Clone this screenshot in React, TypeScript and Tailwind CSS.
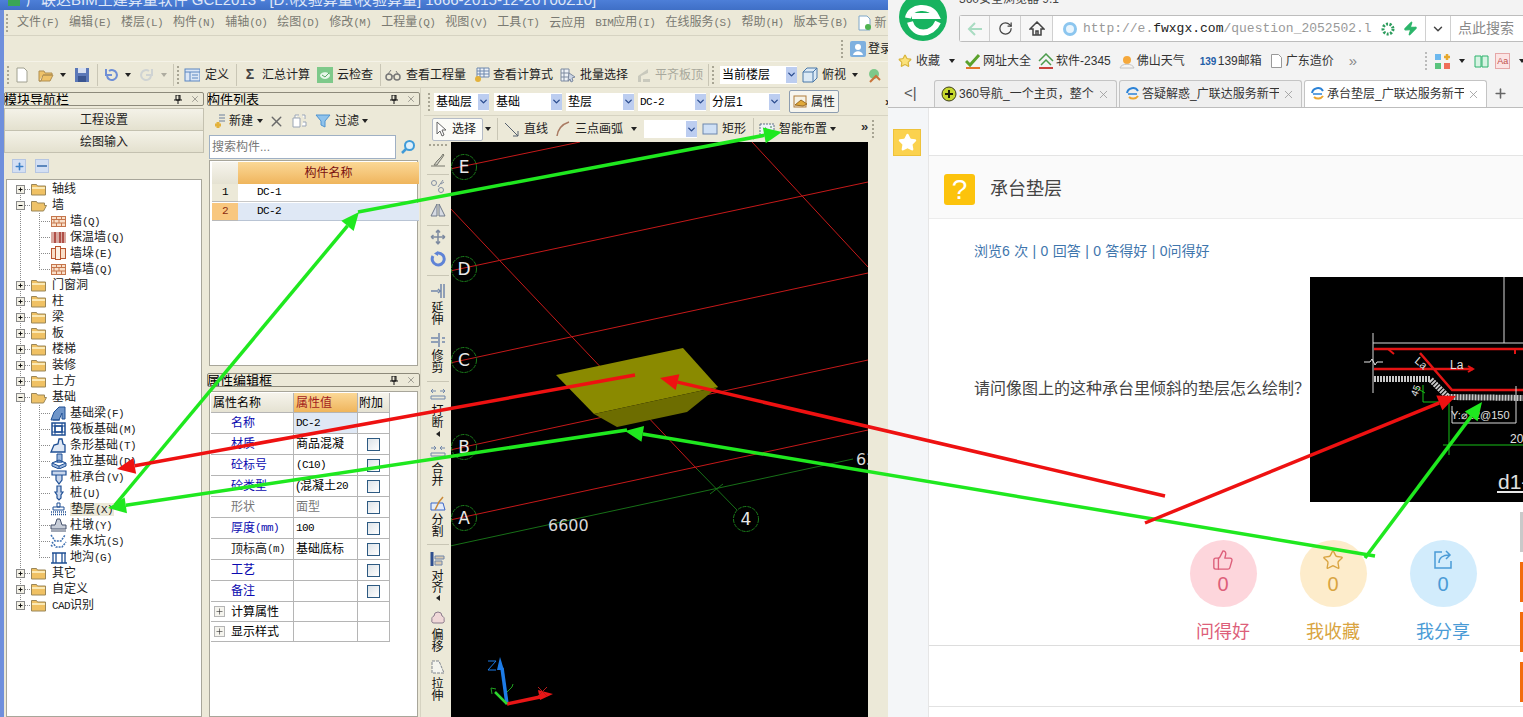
import { ChevronDown, Plus, RotateCw, Star, ThumbsUp, X, Zap } from "lucide-react";
import type { ReactNode } from "react";

// half-width latin, same pitch as the bitmap font in the app
const Lat = ({ children }: { children: ReactNode }) => (
  <span className="text-[11px] tracking-[-0.6px] [font-family:'Liberation_Mono',monospace]">{children}</span>
);

const Caret = ({ className = "" }: { className?: string }) => (
  <svg width="6" height="4" viewBox="0 0 6 4" className={`shrink-0 ${className}`}>
    <path d="M0 0h6L3 4z" fill="#222" />
  </svg>
);

const Gripper = ({ className = "" }: { className?: string }) => (
  <div className={`w-[3px] h-[18px] shrink-0 border-l-2 border-dotted border-[#a8a594] ${className}`} />
);

const Sep = ({ className = "" }: { className?: string }) => (
  <div className={`w-px h-[22px] shrink-0 bg-[#c9c6b5] ${className}`} />
);

const Ico = ({ children, className = "", w = 16 }: { children: ReactNode; className?: string; w?: number }) => (
  <svg width={w} height="16" viewBox={`0 0 ${w} 16`} className={`shrink-0 ${className}`}>
    {children}
  </svg>
);

const Select = ({ label, className, mono }: { label?: string; className: string; mono?: boolean }) => (
  <div className={`h-[18px] bg-white flex items-center justify-between shrink-0 ${className}`}>
    <span className="pl-[2px] text-[12px] leading-none text-black">{mono ? <Lat>{label}</Lat> : label}</span>
    <span className="w-[11px] h-[16px] bg-[#bccdf0] flex items-center justify-center">
      <ChevronDown size={11} strokeWidth={3} color="#2a4c8f" />
    </span>
  </div>
);

const Menu = ({ t, k }: { t: string; k?: string }) => (
  <span className="whitespace-nowrap">
    {t}
    {k && <Lat>{k}</Lat>}
  </span>
);

const PanelHead = ({ title }: { title: string }) => (
  <div className="h-[14px] mt-[4px] shrink-0 rounded-[2px] border border-[#8d8a7b] bg-[#ece9d8] flex items-center justify-between text-[13px] leading-none text-black overflow-hidden">
    <span className="-ml-px whitespace-nowrap">{title}</span>
    <span className="flex items-center gap-[8px] pr-[3px]">
      <svg width="8" height="9" viewBox="0 0 8 9">
        <path d="M2 0h4v5H2zM0 5h8M4 5v4M5 0v5" stroke="#111" fill="none" />
      </svg>
      <X size={10} strokeWidth={1} color="#333" />
    </span>
  </div>
);

const treeIcon = (kind: string) => {
  const navy = "#1f4f94";
  switch (kind) {
    case "wall":
      return (
        <g stroke="#c5764d" fill="#f9dfc9">
          <rect x="44.5" y="3.5" width="14" height="10" />
          <path d="M44.5 6.5h14M44.5 10h14M49.5 3.5v3M54.5 3.5v3M47 6.5v3.5M52 6.5v3.5M49.5 10v3.5M54.5 10v3.5" fill="none" />
        </g>
      );
    case "insul":
      return (
        <g>
          <rect x="44" y="3" width="15" height="11" fill="#d9a9a0" />
          <path d="M48 3v11M53 3v11M56 3v11" stroke="#a3332d" strokeWidth="1.5" />
        </g>
      );
    case "pier":
      return (
        <g stroke="#b8552f" fill="#f9dfc9">
          <rect x="44.5" y="3.5" width="14" height="10" />
          <rect x="48.5" y="1.5" width="5" height="13" fill="#fdf0e2" />
        </g>
      );
    case "beam":
      return <path d="M44 15l3-8 5-5h6v12h-3V8l-3 7zM46 15h7" fill="#6f95c9" stroke={navy} />;
    case "raft":
      return (
        <g stroke={navy} fill="none" strokeWidth="1.5">
          <rect x="45" y="2" width="13" height="12" />
          <rect x="48" y="5" width="7" height="6" />
          <path d="M45 5h13M45 11h13M48 2v12M55 2v12" strokeWidth="1" />
        </g>
      );
    case "strip":
      return <path d="M44 15l3-7 4-1 1-5h3l1 5 2 1v7zM44 15h14" fill="#dfe8f5" stroke={navy} strokeWidth="1.3" />;
    case "iso":
      return <path d="M45 10l7-3 7 3v3l-7 3-7-3zM50 1h5v8h-5zM45 10l7 3 7-3M52 13v3" fill="#9db9df" stroke={navy} />;
    case "cap":
      return <path d="M45 2h14v4H45zM49 6h6v5l-3 4-3-4z" fill="#c8d6ec" stroke={navy} strokeWidth="1.2" />;
    case "pile":
      return <path d="M50 1h4v6h2l-2 3v3l-2 2-2-2v-3l-2-3h2z" fill="#c8d6ec" stroke={navy} strokeWidth="1.2" />;
    case "pad":
      return (
        <g stroke={navy} fill="none">
          <path d="M50 2h3v4h-3zM46 6h11v3H46z" fill="#fff" />
          <path d="M44 11h15M44 13.500h15" strokeDasharray="1 1" strokeWidth="1.5" />
        </g>
      );
    case "pier2":
      return <path d="M50 2h3l2 6h4v4H44V8h4zM44 14h15" fill="#c7cdd8" stroke="#44506a" />;
    case "sump":
      return <path d="M44 2l4 6h6l4-6M45 9l4 5h6l4-5M44 12l2 2" fill="none" stroke="#3d6fb0" strokeWidth="1.5" strokeDasharray="2 1" />;
    default:
      return (
        <g stroke={navy} fill="none" strokeWidth="1.3">
          <path d="M45 4h14M46 4v10h12V4M49 4v10M55 4v10M44 14h16" />
        </g>
      );
  }
};

type Node = { t: string; k?: string; open?: boolean; icon?: string; last?: boolean; first?: boolean; end?: boolean };

const nodes: Node[] = [
  { t: "轴线", first: true },
  { t: "墙", open: true },
  { t: "墙", k: "(Q)", icon: "wall" },
  { t: "保温墙", k: "(Q)", icon: "insul" },
  { t: "墙垛", k: "(E)", icon: "pier" },
  { t: "幕墙", k: "(Q)", icon: "wall", last: true },
  { t: "门窗洞" },
  { t: "柱" },
  { t: "梁" },
  { t: "板" },
  { t: "楼梯" },
  { t: "装修" },
  { t: "土方" },
  { t: "基础", open: true },
  { t: "基础梁", k: "(F)", icon: "beam" },
  { t: "筏板基础", k: "(M)", icon: "raft" },
  { t: "条形基础", k: "(T)", icon: "strip" },
  { t: "独立基础", k: "(D)", icon: "iso" },
  { t: "桩承台", k: "(V)", icon: "cap" },
  { t: "桩", k: "(U)", icon: "pile" },
  { t: "垫层", k: "(X)", icon: "pad" },
  { t: "柱墩", k: "(Y)", icon: "pier2" },
  { t: "集水坑", k: "(S)", icon: "sump" },
  { t: "地沟", k: "(G)", icon: "ditch", last: true },
  { t: "其它" },
  { t: "自定义" },
  { t: "CAD识别", end: true },
];

const TreeRow = ({ n }: { n: Node }) => {
  const dots = { stroke: "#8a8a8a", strokeDasharray: "1 1", fill: "none" };
  const child = !!n.icon;
  return (
    <div className="h-4 flex items-center">
      <svg width={child ? 60 : 44} height="16" className="shrink-0">
        <path d={`M13.500 ${n.first ? 8 : 0}V${n.end ? 8 : 16}`} {...dots} />
        {child ? (
          <>
            <path d={`M32.500 0V${n.last ? 8 : 16}M32 8.500h12`} {...dots} />
            {treeIcon(n.icon!)}
          </>
        ) : (
          <>
            <path d="M18 8.500h6" {...dots} />
            <rect x="9.500" y="4.500" width="8" height="8" fill="#f3f1e6" stroke="#8a8a8a" />
            <path d={n.open ? "M11.500 8.500h4" : "M11.500 8.500h4M13.500 6.500v4"} stroke="#111" />
            {n.open ? (
              <path d="M24.500 4.500h5l1 1.500h7v2.500h2l-3 5.500h-12z" fill="#eec269" stroke="#9a8658" />
            ) : (
              <>
                <path d="M24.500 3.500h5l1 1.500h8v9h-14z" fill="#f0c163" stroke="#9a8658" />
                <path d="M25 6h13v2H25z" fill="#fbe9b4" />
              </>
            )}
          </>
        )}
      </svg>
      <span
        className={`text-[12px] leading-none text-[#222] whitespace-nowrap ${child ? "ml-[3px]" : "ml-px"} ${
          n.t === "垫层" ? "bg-[#ece9d8] px-px" : ""
        }`}
      >
        {n.t === "CAD识别" ? (
          <>
            <Lat>CAD</Lat>识别
          </>
        ) : (
          n.t
        )}
        {n.k && <Lat>{n.k}</Lat>}
      </span>
    </div>
  );
};

const NavPanel = () => (
  <div className="w-[200px] shrink-0 flex flex-col">
    <PanelHead title="模块导航栏" />
    <div className="mt-[2px] h-[23px] flex items-center justify-center text-[12px] border border-[#c4c1b0] bg-gradient-to-b from-[#f4f2e8] to-[#e4e1cf] text-[#222]">
      工程设置
    </div>
    <div className="h-[22px] flex items-center justify-center text-[12px] border-x border-b border-[#c4c1b0] bg-gradient-to-b from-[#f4f2e8] to-[#e4e1cf] text-[#222]">
      绘图输入
    </div>
    <div className="h-[26px] flex items-center gap-[9px] pl-[8px] bg-[#ece9d8]">
      <span className="w-[14px] h-[14px] bg-[#d3dff3] border border-[#b6c6e2] flex items-center justify-center">
        <Plus size={11} strokeWidth={3.500} color="#3b7fc7" />
      </span>
      <span className="w-[14px] h-[14px] bg-[#d3dff3] border border-[#b6c6e2] flex items-center justify-center">
        <span className="w-[10px] h-[2px] bg-[#5c87bd]" />
      </span>
    </div>
    <div className="flex-1 ml-[2px] mr-[2px] border border-[#a8a69a] bg-white pt-[1px]">
      {nodes.map((n, i) => (
        <TreeRow key={i} n={n} />
      ))}
    </div>
  </div>
);

const ListPanel = () => (
  <div className="h-[278px] shrink-0 flex flex-col">
    <PanelHead title="构件列表" />
    <div className="h-[26px] mt-[2px] shrink-0 flex items-center text-[12px] text-[#222] bg-[#ece9d8]">
      <Ico className="ml-[4px]">
        <path d="M4 12h6M7 9v6" stroke="#e3b23c" strokeWidth="3" />
        <path d="M8 2h6M8 5h6M8 8h6" stroke="#6a7f9c" />
      </Ico>
      <span className="ml-[2px]">新建</span>
      <Caret className="ml-[4px]" />
      <X size={17} strokeWidth={2} color="#6a6a6a" className="ml-[5px]" />
      <Ico className="ml-[7px]">
        <path d="M1 5h7v9H1zM3 5V2h4M10 2h3v4M11 9h3v4h-4" fill="#fff" stroke="#9aa5b5" />
      </Ico>
      <Ico className="ml-[7px]">
        <path d="M1 2h14L10 8v6l-4-2V8z" fill="#8fc3ec" stroke="#4f93cf" />
      </Ico>
      <span className="ml-[4px]">过滤</span>
      <Caret className="ml-[3px]" />
    </div>
    <div className="h-[26px] shrink-0 flex items-center bg-[#ece9d8] pl-[2px]">
      <div className="w-[187px] h-[24px] bg-white border border-[#9fb0c4] flex items-center pl-[2px] text-[12px] text-[#777]">搜索构件...</div>
      <svg width="16" height="16" viewBox="0 0 16 16" className="ml-[4px]">
        <circle cx="9.500" cy="6.500" r="4.500" fill="#dff0fb" stroke="#3f9bd8" strokeWidth="2" />
        <path d="M6 10l-4 4" stroke="#3f9bd8" strokeWidth="2.500" />
      </svg>
    </div>
    <div className="flex-1 mx-[2px] border border-[#a8a69a] bg-white px-[2px] pt-[1px]">
      <div className="grid grid-cols-[26px_181px] auto-rows-[18px] text-[12px] text-black">
        <div className="h-[22px] bg-gradient-to-b from-[#f6f4ec] to-[#e5e2d2]" />
        <div className="h-[22px] bg-gradient-to-b from-[#fbd896] to-[#efb55c] flex items-center justify-center text-[#7a0f0f]">构件名称</div>
        <div className="mt-[4px] h-[18px] bg-[#ece9d8] border-b border-[#b9b9b9] flex items-center justify-center"><Lat>1</Lat></div>
        <div className="mt-[4px] h-[18px] border-b border-[#c8c8c8] flex items-center pl-[19px]"><Lat>DC-1</Lat></div>
        <div className="mt-[5px] h-[18px] bg-[#f8c77f] border-b border-[#b9b9b9] flex items-center justify-center text-[#8a2b10]"><Lat>2</Lat></div>
        <div className="mt-[5px] h-[18px] bg-[#dfe8f5] border-b border-[#b9c4d4] flex items-center pl-[19px]"><Lat>DC-2</Lat></div>
      </div>
    </div>
  </div>
);

const props: { n: ReactNode; v?: ReactNode; c: string; g?: boolean }[] = [
  { n: "材质", v: "商品混凝", c: "text-[#0a0ab0]" },
  { n: "砼标号", v: <Lat>(C10)</Lat>, c: "text-[#0a0ab0]" },
  { n: "砼类型", v: <>(混凝土<Lat>20</Lat></>, c: "text-[#0a0ab0]" },
  { n: "形状", v: "面型", c: "text-[#777]", g: true },
  { n: <>厚度<Lat>(mm)</Lat></>, v: <Lat>100</Lat>, c: "text-[#0a0ab0]" },
  { n: <>顶标高<Lat>(m)</Lat></>, v: "基础底标", c: "text-[#222]" },
  { n: "工艺", c: "text-[#0a0ab0]" },
  { n: "备注", c: "text-[#0a0ab0]" },
];

const cell = "border-r border-b border-[#b5b5b5] flex items-center overflow-hidden whitespace-nowrap";

const PropPanel = () => (
  <div className="flex-1 mt-[3px] flex flex-col min-h-0">
    <PanelHead title="属性编辑框" />
    <div className="flex-1 mt-[4px] mx-[2px] border border-[#a8a69a] bg-white pl-[1px] pt-[1px] text-[12px] text-black">
      <div className="grid grid-cols-[83px_64px_32px] w-[179px]">
        <div className={`${cell} h-[20px] pl-[2px] bg-gradient-to-b from-[#f6f4ec] to-[#e5e2d2]`}>属性名称</div>
        <div className={`${cell} h-[20px] pl-[2px] bg-gradient-to-b from-[#fbd896] to-[#efb55c] text-[#a31d1d]`}>属性值</div>
        <div className={`${cell} h-[20px] pl-[1px] bg-gradient-to-b from-[#f6f4ec] to-[#e5e2d2]`}>附加</div>

        <div className={`${cell} h-[21px] pl-[20px] text-[#0a0ab0]`}>名称</div>
        <div className={`${cell} h-[21px] pl-[2px] bg-[#dfe8f5]`}><Lat>DC-2</Lat></div>
        <div className={`${cell} h-[21px]`} />

        {props.map((p, i) => (
          <div key={i} className="contents">
            <div className={`${cell} h-[21px] pl-[20px] ${p.c}`}>{p.n}</div>
            <div className={`${cell} h-[21px] pl-[2px] ${p.g ? "text-[#777]" : ""}`}>{p.v}</div>
            <div className={`${cell} h-[21px] justify-center`}>
              <span className="w-[13px] h-[13px] border border-[#2d5a82] bg-gradient-to-br from-[#dde3e8] to-white" />
            </div>
          </div>
        ))}

        {["计算属性", "显示样式"].map((t) => (
          <div key={t} className="contents">
            <div className={`${cell} h-[20px] pl-[3px]`}>
              <span className="w-[11px] h-[11px] mr-[6px] border border-[#b5b5b5] bg-[#f5f4ee] flex items-center justify-center">
                <Plus size={9} strokeWidth={1.500} color="#222" />
              </span>
              {t}
            </div>
            <div className={`${cell} h-[20px]`} />
            <div className={`${cell} h-[20px]`} />
          </div>
        ))}
      </div>
    </div>
  </div>
);

const VLabel = ({ t, className }: { t: string; className: string }) => (
  <div className={`flex flex-col items-center text-[12px] leading-[12px] text-[#111] ${className}`}>
    {t.split("").map((c) => (
      <span key={c}>{c}</span>
    ))}
  </div>
);

const VSep = ({ className }: { className: string }) => <div className={`w-[22px] h-px shrink-0 bg-[#c9c6b5] ${className}`} />;

const VCaret = ({ className }: { className: string }) => (
  <svg width="4" height="6" viewBox="0 0 4 6" className={className}>
    <path d="M4 0v6L0 3z" fill="#222" />
  </svg>
);

const VToolbar = () => (
  <div className="w-[27px] shrink-0 flex flex-col items-center bg-[#ece9d8]">
    <div className="mt-[2px] w-[18px] h-[2px] border-t-2 border-dotted border-[#a8a594]" />
    <Ico className="mt-[6px]">
      <path d="M1 14h14M4 13l3-4 4-4 2-3 1 1-2 3-3 4-2 3z" fill="#cfcfc4" stroke="#77776c" />
    </Ico>
    <VSep className="mt-[6px]" />
    <Ico className="mt-[3px]">
      <circle cx="4" cy="5" r="2.500" fill="none" stroke="#8590a3" />
      <circle cx="11" cy="12" r="2.500" fill="none" stroke="#8590a3" />
      <path d="M8 9l5-7M11 6l3-2" stroke="#8590a3" fill="none" />
    </Ico>
    <Ico className="mt-[8px]">
      <path d="M7 2v12H1zM9 2v12h6z" fill="#d7dbe3" stroke="#707a8a" />
    </Ico>
    <VSep className="mt-[7px]" />
    <Ico className="mt-[3px]">
      <path d="M8 1v14M1 8h14M8 1L6 3.500M8 1l2 2.500M8 15l-2-2.500M8 15l2-2.500M1 8l2.500-2M1 8l2.500 2M15 8l-2.500-2M15 8l-2.500 2" fill="none" stroke="#7d8aa0" strokeWidth="1.500" />
    </Ico>
    <Ico className="mt-[6px]">
      <path d="M8 2a6 6 0 1 1-5 3" fill="none" stroke="#5f83d6" strokeWidth="3" />
      <path d="M8 0v5L4 2.500z" fill="#5f83d6" />
    </Ico>
    <VSep className="mt-[8px]" />
    <Ico className="mt-[7px]">
      <path d="M1 8h7M11 1v14M14 1v14M8 6l2 2-2 2" fill="none" stroke="#7187ab" strokeWidth="1.500" />
    </Ico>
    <VLabel t="延伸" className="mt-[3px]" />
    <Ico className="mt-[6px]">
      <path d="M1 6h7M1 10h7M9 1v14M12 6h3M12 10h3" fill="none" stroke="#7187ab" strokeWidth="1.500" />
    </Ico>
    <VLabel t="修剪" className="mt-[2px]" />
    <VSep className="mt-[7px]" />
    <Ico className="mt-[4px]">
      <path d="M1 5h5M10 5h5M3 3L1 5l2 2M13 3l2 2-2 2M1 10h14v3H1z" fill="none" stroke="#7187ab" />
    </Ico>
    <VLabel t="打断" className="mt-[3px]" />
    <VCaret className="mt-[2px]" />
    <Ico className="mt-[6px]">
      <path d="M1 5h5M10 5h5M4 3l2 2-2 2M12 3l-2 2 2 2M1 10h14v3H1z" fill="none" stroke="#7187ab" />
    </Ico>
    <VLabel t="合并" className="mt-[4px]" />
    <Ico className="mt-[9px]">
      <path d="M1 7h12l2 7H1z" fill="#e4ecf8" stroke="#3a66c8" />
      <path d="M5 14l4-8 4-5" fill="none" stroke="#c98a3a" strokeWidth="1.500" />
    </Ico>
    <VLabel t="分割" className="mt-[2px]" />
    <VSep className="mt-[6px]" />
    <Ico className="mt-[6px]">
      <path d="M2 1v14" stroke="#2f4f8f" strokeWidth="3" />
      <path d="M5 5h9v3H5zM5 10h7v4H5z" fill="#d9c9b0" stroke="#7187ab" />
    </Ico>
    <VLabel t="对齐" className="mt-[3px]" />
    <VCaret className="mt-[1px]" />
    <Ico className="mt-[9px]">
      <path d="M2 10a3 3 0 0 1 2-4 4 4 0 0 1 8 0 3 3 0 0 1 2 4 2 2 0 0 1-2 3H4a2 2 0 0 1-2-3z" fill="#f0d8d8" stroke="#8d7d8d" />
    </Ico>
    <VLabel t="偏移" className="mt-[3px]" />
    <Ico className="mt-[6px]">
      <path d="M2 2h7l5 12H2z" fill="#f4f4ee" stroke="#80868f" strokeDasharray="3 1" />
    </Ico>
    <VLabel t="拉伸" className="mt-[3px]" />
  </div>
);

const axes: [string, number, number][] = [
  ["E", 464, 167],
  ["D", 464, 269],
  ["C", 464, 360],
  ["B", 464, 447],
  ["A", 464, 518],
  ["4", 746, 519],
];

const Canvas = () => (
  <svg viewBox="451 142 417 575" className="w-[417px] h-[575px] shrink-0 bg-black">
    <g stroke="#c51919" strokeWidth="1" fill="none">
      <path d="M450 169L580 142M450 271L868 182M450 363L868 273M450 450L868 360M450 520L868 430M752 142L868 267M450 208L697 469" />
    </g>
    <path d="M450 546L853 459M697 469L737 510M710 494L723 484" stroke="#176f17" fill="none" />
    <path d="M556 375L683 348L718 387L594 414z" fill="#8a8a00" />
    <path d="M594 414L718 387L687 412L617 427z" fill="#6d6d00" />
    {axes.map(([t, x, y]) => (
      <g key={t}>
        <circle cx={x} cy={y} r="12.500" fill="none" stroke="#1a7a1a" strokeDasharray="4 1" />
        <text x={x} y={y + 6} textAnchor="middle" fill="#e8e8e8" fontSize="17" fontFamily="DejaVu Sans">
          {t}
        </text>
      </g>
    ))}
    <text x="548" y="531" fill="#d8d8d8" fontSize="16" fontFamily="DejaVu Sans">6600</text>
    <text x="856" y="465" fill="#d8d8d8" fontSize="16" fontFamily="DejaVu Sans">63</text>
    <path d="M507 704L502 668" stroke="#1d7be6" strokeWidth="3.500" />
    <path d="M500 657l4 13h-7z" fill="#1d7be6" />
    <path d="M507 704L540 697" stroke="#e81616" strokeWidth="3.500" />
    <path d="M553 694l-13 6-2-10z" fill="#e81616" />
    <path d="M507 704L495 692" stroke="#2fd62f" strokeWidth="2.500" />
    <path d="M488 661h8l-8 9h8" fill="none" stroke="#1d7be6" />
    <path d="M538 687l9 9M547 687l-9 9" stroke="#b51a1a" />
    <path d="M507 692l5-5M512 687l1-3" stroke="#1fa01f" fill="none" />
    <path d="M492 694l-1-6 5 1" stroke="#1fa01f" fill="none" />
  </svg>
);

const CadPicture = () => (
  <svg viewBox="1310 277 213 225" className="w-[213px] h-[225px] shrink-0 bg-black">
    <path d="M1504 277V343M1373 343H1523M1373 333V393" stroke="#d8d8d8" fill="none" />
    <path d="M1364 362h6l2-3 3 6 2-3h6" stroke="#e8e8e8" fill="none" />
    <g stroke="#e41414" fill="none" strokeWidth="2.500">
      <path d="M1374 349H1523M1420 353L1452 390H1523M1374 369H1473" />
      <path d="M1388 349l6 5M1515 349v5M1468 366l5 3-5 3" strokeWidth="2" />
    </g>
    <path d="M1374 379H1430L1448 397L1523 398" stroke="#c8c8c8" strokeWidth="6" strokeDasharray="2 1" fill="none" />
    <path d="M1452 406V423H1516V386" stroke="#d8d8d8" fill="none" />
    <path d="M1449 403V455M1443 445H1523M1423 402H1449M1423 402V385M1415 387l10 6" stroke="#16c016" fill="none" />
    <path d="M1497 492H1523" stroke="#e8e8e8" strokeWidth="2" />
    <g fill="#e0e0e0" fontFamily="Liberation Sans">
      <text x="1451" y="419" fontSize="11">Y:⌀12@150</text>
      <text x="1450" y="369" fontSize="12">La</text>
      <text x="1510" y="443" fontSize="12">20</text>
      <text x="1498" y="489" fontSize="21">d1-</text>
      <text x="1414" y="362" fontSize="11" transform="rotate(40 1414 362)">La</text>
      <text x="1417" y="397" fontSize="10" transform="rotate(-70 1417 397)">45</text>
    </g>
  </svg>
);

const Ie = ({ className = "" }: { className?: string }) => (
  <svg width="14" height="14" viewBox="0 0 14 14" className={`shrink-0 ${className}`}>
    <path d="M1 6a6 6 0 0 1 11-2" fill="none" stroke="#2b82d6" strokeWidth="2" />
    <path d="M2 7h9" stroke="#2b82d6" strokeWidth="1.500" />
    <path d="M3 10a6 6 0 0 0 9-1" fill="none" stroke="#eca52e" strokeWidth="2" />
  </svg>
);

const Tab = ({ title, icon, active, className = "" }: { title: string; icon: ReactNode; active?: boolean; className?: string }) => (
  <div
    className={`w-[183px] h-[27px] shrink-0 flex items-center pl-[6px] pr-[6px] rounded-t-[3px] border border-b-0 border-[#c4c4c4] text-[12px] text-[#333] ${
      active ? "bg-white" : "bg-[#efefef]"
    } ${className}`}
  >
    {icon}
    <span className="ml-[2px] flex-1 overflow-hidden whitespace-nowrap">{title}</span>
    <X size={13} strokeWidth={1.500} color="#999" className="ml-[3px] shrink-0" />
  </div>
);

const Vote = ({ icon, label, bg, fg }: { icon: ReactNode; label: string; bg: string; fg: string }) => (
  <div className={`w-[110px] flex flex-col items-center ${fg}`}>
    <div className={`w-[67px] h-[67px] rounded-full flex flex-col items-center pt-[9px] ${bg}`}>
      {icon}
      <span className="text-[20px] leading-[24px] mt-[1px]">0</span>
    </div>
    <span className="mt-[13px] text-[18px] leading-[24px]">{label}</span>
  </div>
);

const Browser = () => (
  <div className="w-[635px] h-[717px] shrink-0 flex flex-col bg-[#f3f3f3] text-[#333]">
    <div className="h-[42px] shrink-0 flex items-start overflow-hidden">
      <svg width="50" height="42" viewBox="0 0 50 42" className="ml-[10px] shrink-0">
        <circle cx="25" cy="17" r="24" fill="#17b35f" />
        <path d="M10 18c2-12 22-14 28-2H14M40 22c-6 14-24 14-28 0" fill="none" stroke="#fff" strokeWidth="6" />
      </svg>
      <div className="flex-1 min-w-0 ml-[11px]">
        <div className="h-[15px] -mt-[8px] text-[12px] leading-[15px] text-[#444] whitespace-nowrap">360安全浏览器 9.1</div>
        <div className="h-[27px] mt-[8px] rounded-l-[3px] border border-r-0 border-[#bdbdbd] bg-white flex items-center">
          <span className="w-[30px] h-full flex items-center justify-center bg-[#f7f7f7] border-r border-[#d0d0d0]">
            <svg width="16" height="16" viewBox="0 0 16 16"><path d="M15 8H2M8 2L2 8l6 6" fill="none" stroke="#a9dcc2" strokeWidth="2" /></svg>
          </span>
          <span className="w-[31px] h-full flex items-center justify-center bg-[#f7f7f7] border-r border-[#d0d0d0]">
            <RotateCw size={15} color="#444" strokeWidth={2} />
          </span>
          <span className="w-[32px] h-full flex items-center justify-center bg-[#f7f7f7] border-r border-[#d0d0d0]">
            <svg width="16" height="16" viewBox="0 0 16 16"><path d="M8 1L1 8h3v6h8V8h3zM7 14v-4h2v4" fill="none" stroke="#444" strokeWidth="1.500" /></svg>
          </span>
          <span className="ml-[10px] w-[14px] h-[14px] rounded-full border-[3px] border-[#8cc6ef] bg-[#e9f5fd] shrink-0" />
          <span className="ml-[6px] w-[296px] overflow-hidden whitespace-nowrap text-[13px] [font-family:'Liberation_Mono',monospace] text-[#999]">
            http://e.<span className="text-[#222]">fwxgx.com</span>/question_2052502.l
          </span>
          <svg width="14" height="14" viewBox="0 0 14 14" className="ml-[2px] shrink-0"><circle cx="7" cy="7" r="5" fill="none" stroke="#2c9c5c" strokeWidth="3" strokeDasharray="2 1.500" /></svg>
          <Zap size={15} fill="#2cb56a" stroke="#2cb56a" className="ml-[8px] shrink-0" />
          <span className="ml-[7px] h-full w-[26px] shrink-0 border-x border-[#d0d0d0] flex items-center justify-center">
            <ChevronDown size={14} strokeWidth={2.500} color="#444" />
          </span>
          <span className="ml-[7px] whitespace-nowrap text-[14px] text-[#888]">点此搜索</span>
        </div>
      </div>
    </div>
    <div className="h-[38px] shrink-0 flex items-center text-[12px] whitespace-nowrap">
      <Star size={14} className="ml-[10px] shrink-0" fill="#fbe27b" stroke="#d9b53c" />
      <span className="ml-[4px]">收藏</span>
      <Caret className="ml-[9px]" />
      <svg width="16" height="16" viewBox="0 0 16 16" className="ml-[10px] shrink-0"><path d="M1 8l4 4 9-10" fill="none" stroke="#5aa12b" strokeWidth="3" /><path d="M1 15h14" stroke="#e3762b" strokeWidth="2" /></svg>
      <span className="ml-[2px]">网址大全</span>
      <svg width="16" height="16" viewBox="0 0 16 16" className="ml-[7px] shrink-0"><path d="M1 8l7-7 7 7M3 12l5-5 5 5" fill="none" stroke="#4b9b4b" strokeWidth="1.500" /><path d="M1 15h14" stroke="#c9433c" strokeWidth="2" /></svg>
      <span className="ml-[2px]">软件-2345</span>
      <svg width="16" height="16" viewBox="0 0 16 16" className="ml-[8px] shrink-0"><circle cx="8" cy="7" r="4" fill="#f5a83b" /><path d="M1 15c1-5 13-5 14 0z" fill="#f4f4f4" stroke="#c4c4c4" /></svg>
      <span className="ml-[2px]">佛山天气</span>
      <span className="ml-[15px] w-[16px] text-[#1f5ea8] font-bold text-[10px] shrink-0">139</span>
      <span className="ml-[2px]">139邮箱</span>
      <svg width="11" height="14" viewBox="0 0 11 14" className="ml-[9px] shrink-0"><path d="M.5.500h7l3 3v10H.5z" fill="#fff" stroke="#999" /></svg>
      <span className="ml-[4px]">广东造价</span>
      <span className="ml-[15px] text-[15px] text-[#888]">»</span>
      <div className="ml-[68px] w-[3px] h-[18px] border-l-2 border-dotted border-[#bbb]" />
      <svg width="17" height="17" viewBox="0 0 17 17" className="ml-[7px] shrink-0">
        <rect x="1" y="1" width="6" height="6" fill="#6cb8ee" />
        <rect x="1" y="10" width="6" height="6" fill="#5ac47d" />
        <rect x="10" y="10" width="6" height="6" fill="#ef6d5a" />
        <path d="M13 1v6M10 4h6" stroke="#e6a82e" strokeWidth="2.500" />
      </svg>
      <Caret className="ml-[8px]" />
      <svg width="15" height="15" viewBox="0 0 15 15" className="ml-[9px] shrink-0"><path d="M1 2h6v11H1zM8 2h6v11H8z" fill="#d7f3e3" stroke="#2db36d" /></svg>
      <span className="ml-[6px] w-[15px] h-[16px] border border-[#e5a7a7] bg-[#fbe4e4] text-[9px] leading-[14px] text-center text-[#c0504d] shrink-0">Aa</span>
      <Caret className="ml-[9px]" />
    </div>
    <div className="h-[27px] shrink-0 flex items-end">
      <span className="ml-[16px] w-[30px] h-[27px] flex items-center text-[15px] text-[#555] shrink-0">&lt;|</span>
      <Tab
        title="360导航_一个主页，整个世界"
        icon={
          <svg width="16" height="16" viewBox="0 0 16 16" className="shrink-0">
            <circle cx="8" cy="8" r="7" fill="#c6d82e" stroke="#3b3b1a" />
            <path d="M8 4v8M4 8h8" stroke="#1c1c08" strokeWidth="2" />
          </svg>
        }
      />
      <Tab title="答疑解惑_广联达服务新干线" className="ml-[2px]" icon={<Ie />} />
      <Tab title="承台垫层_广联达服务新干线" className="ml-[2px]" active icon={<Ie />} />
      <Plus size={15} strokeWidth={2.500} color="#666" className="ml-[6px] mb-[6px] shrink-0" />
    </div>
    <div className="flex-1 min-h-0 flex border-t border-[#bdbdbd] bg-white">
      <div className="w-[40px] shrink-0 bg-[#f4f6f8] pl-[5px] pt-[21px]">
        <div className="w-[28px] h-[27px] bg-[#fbd24e] border border-[#eec23a] flex items-center justify-center">
          <Star size={19} fill="#fff" stroke="#fff" />
        </div>
      </div>
      <div className="flex-1 min-w-0 flex flex-col border-l border-[#e6e6e6]">
        <div className="h-[48px] shrink-0 border-b border-[#e4e4e4]" />
        <div className="h-[63px] shrink-0 flex items-center bg-[#fafafa] border-b border-[#ececec] pl-[15px] pt-[5px]">
          <div className="w-[31px] h-[31px] rounded-[3px] bg-[#fcc30c] text-white text-[28px] leading-[31px] text-center font-light">?</div>
          <span className="ml-[15px] text-[18px] text-[#444]">承台垫层</span>
        </div>
        <div className="flex-1 min-h-0 flex">
          <div className="w-[381px] shrink-0 pl-[45px]">
            <p className="mt-[22px] h-[20px] text-[14px] leading-[20px] text-[#3f76ad] whitespace-nowrap [word-spacing:0.5px]">浏览6 次 | 0 回答 | 0 答得好 | 0问得好</p>
            <p className="mt-[118px] text-[16px] leading-[20px] text-[#444] whitespace-nowrap">请问像图上的这种承台里倾斜的垫层怎么绘制？</p>
            <div className="mt-[141px] flex pl-[194px] w-[600px]">
              <Vote bg="bg-[#fdd6dc]" fg="text-[#dd5f7a]" label="问得好" icon={<ThumbsUp size={22} strokeWidth={1.500} />} />
              <Vote bg="bg-[#fdeccb]" fg="text-[#d9a441]" label="我收藏" icon={<Star size={22} strokeWidth={1.500} />} />
              <Vote
                bg="bg-[#d2ecfc]"
                fg="text-[#4a9bd6]"
                label="我分享"
                icon={
                  <svg width="22" height="22" viewBox="0 0 22 22" fill="none" stroke="currentColor" strokeWidth="1.500">
                    <path d="M10 3H3v16h16v-7" />
                    <path d="M7 14c0-5 4-8 10-8M14 2l4 4-4 4" />
                  </svg>
                }
              />
            </div>
            <div className="mt-px -ml-[45px] h-px w-[595px] bg-[#dddddd]" />
            <div className="mt-[60px] -ml-[45px] h-px w-[595px] bg-[#e2e2e2]" />
          </div>
          <div className="flex-1 min-w-0 flex flex-col">
            <div className="mt-[58px]"><CadPicture /></div>
            <div className="mt-[10px] self-end w-[3px] flex flex-col gap-[10px]">
              <div className="h-[40px] bg-[#c9c9c9]" />
              <div className="h-[40px] bg-[#f26c0d]" />
              <div className="h-[40px] bg-[#f26c0d]" />
              <div className="h-[40px] bg-[#f26c0d]" />
            </div>
          </div>
        </div>
      </div>
    </div>
  </div>
);

const Arrow = ({ x1, y1, x2, y2, color }: { x1: number; y1: number; x2: number; y2: number; color: string }) => {
  const a = Math.atan2(y2 - y1, x2 - x1);
  const bx = x2 - Math.cos(a) * 18;
  const by = y2 - Math.sin(a) * 18;
  const ox = Math.sin(a) * 8;
  const oy = Math.cos(a) * 8;
  return (
    <>
      <line x1={x1} y1={y1} x2={bx} y2={by} stroke={color} strokeWidth="3.500" />
      <polygon points={`${x2},${y2} ${bx + ox},${by - oy} ${bx - ox},${by + oy}`} fill={color} />
    </>
  );
};

const Arrows = () => (
  <svg width="1523" height="717" className="absolute inset-0 pointer-events-none">
    <Arrow x1={115} y1={505} x2={359} y2={212} color="#1fe81f" />
    <Arrow x1={358} y1={212} x2={782} y2={132} color="#1fe81f" />
    <Arrow x1={627} y1={430} x2={108} y2={508} color="#1fe81f" />
    <Arrow x1={1375} y1={556} x2={625} y2={431} color="#1fe81f" />
    <Arrow x1={1365} y1={558} x2={1482} y2={402} color="#1fe81f" />
    <Arrow x1={635} y1={375} x2={117} y2={469} color="#ee1111" />
    <Arrow x1={1165} y1={496} x2={660} y2={378} color="#ee1111" />
    <Arrow x1={1145} y1={523} x2={1456} y2={396} color="#ee1111" />
  </svg>
);

export default function App() {
  return (
    <div className="relative w-[1523px] h-[717px] overflow-hidden flex bg-white [font-family:'Liberation_Sans','Noto_Sans_CJK_SC',sans-serif]">
      <div className="w-[888px] shrink-0 h-full flex flex-col bg-[#ece9d8] overflow-hidden">
        <div className="h-[10px] shrink-0 overflow-hidden bg-gradient-to-b from-[#4d7fd8] to-[#3f6fc6] flex text-[15px] leading-none text-[#dfe7f7] whitespace-nowrap">
          <span className="ml-[8px] w-[12px] h-[6px] bg-[#3aa655] shrink-0" />
          <span className="ml-[6px] -mt-[8px]">广联达BIM土建算量软件 GCL2013 - [D:\校验算量\校验算量] 1666-2015-12-20T00Z10]</span>
        </div>
        <div className="flex-1 min-h-0 flex">
          <div className="w-[4px] shrink-0 bg-[#6f8fdc]" />
          <div className="flex-1 min-w-0 flex flex-col">
            <div className="h-[26px] shrink-0 flex items-center border-b border-[#d6d3c2] text-[12px] text-[#7a7a72]">
              <Gripper className="ml-[2px]" />
              <div className="ml-[8px] flex items-center gap-[10px] whitespace-nowrap">
                <Menu t="文件" k="(F)" />
                <Menu t="编辑" k="(E)" />
                <Menu t="楼层" k="(L)" />
                <Menu t="构件" k="(N)" />
                <Menu t="辅轴" k="(O)" />
                <Menu t="绘图" k="(D)" />
                <Menu t="修改" k="(M)" />
                <Menu t="工程量" k="(Q)" />
                <Menu t="视图" k="(V)" />
                <Menu t="工具" k="(T)" />
                <Menu t="云应用" />
                <span><Lat>BIM</Lat>应用<Lat>(I)</Lat></span>
                <Menu t="在线服务" k="(S)" />
                <Menu t="帮助" k="(H)" />
                <Menu t="版本号" k="(B)" />
                <Ico>
                  <path d="M2 1h8l3 3v11H2z" fill="#fff" stroke="#7fa7c9" />
                  <circle cx="11" cy="12" r="3" fill="#4fb24f" />
                </Ico>
                <span className="-ml-[9px]">新</span>
              </div>
            </div>
            <div className="h-[26px] shrink-0 flex items-center justify-end border-b border-[#f5f3e8] text-[12px] text-[#222]">
              <Gripper />
              <svg width="16" height="16" viewBox="0 0 16 16" className="ml-[6px] shrink-0">
                <rect width="16" height="16" rx="2" fill="#7eb0df" />
                <circle cx="8" cy="6" r="3" fill="#fff" />
                <path d="M3 14c1-5 9-5 10 0z" fill="#fff" />
              </svg>
              <span className="ml-[2px] w-[20px] overflow-hidden whitespace-nowrap">登录</span>
            </div>
            <div className="h-[26px] shrink-0 flex items-center border-b border-[#d6d3c2] text-[12px] text-[#222] whitespace-nowrap">
              <Gripper className="ml-[3px]" />
              <Ico className="ml-[4px]"><path d="M3 1h7l3 3v11H3z" fill="#fff" stroke="#a0a090" /></Ico>
              <Ico className="ml-[8px]"><path d="M1 14V4h5l1 2h7v2H5l-2 6zM1 14h11l3-6H5" fill="#eec269" stroke="#b08f52" /></Ico>
              <Caret className="ml-[6px]" />
              <Ico className="ml-[8px]"><rect x="1" y="1" width="14" height="14" fill="#5b78b8" /><rect x="4" y="1" width="8" height="5" fill="#d8e0f0" /><rect x="4" y="9" width="8" height="6" fill="#3a5590" /></Ico>
              <Sep className="ml-[7px]" />
              <Ico className="ml-[5px]"><path d="M4 9a5 5 0 1 0 2-5M3 2v6h6" fill="none" stroke="#6f8fd6" strokeWidth="2" /></Ico>
              <Caret className="ml-[6px]" />
              <Ico className="ml-[8px]"><path d="M12 9a5 5 0 1 1-2-5M13 2v6H7" fill="none" stroke="#cfd3d3" strokeWidth="2" /></Ico>
              <Caret className="ml-[6px] opacity-30" />
              <Sep className="ml-[6px]" />
              <Gripper className="ml-[3px]" />
              <Ico className="ml-[4px]"><rect x="1" y="2" width="15" height="12" fill="#dbe6f5" stroke="#5b86c0" /><path d="M1 5h15M6 5v9M8 8h6M8 11h6" stroke="#5b86c0" /></Ico>
              <span className="ml-[5px]">定义</span>
              <Sep className="ml-[7px]" />
              <span className="ml-[5px] w-[16px] text-center text-[14px] font-bold text-[#444]">Σ</span>
              <span className="ml-[4px]">汇总计算</span>
              <Ico className="ml-[7px]"><rect width="16" height="16" fill="#7ec98a" /><path d="M3 9c0-5 10-5 10 0-2 4-8 4-10 0z" fill="#e8f7ea" /><path d="M5 8l3 2 4-4" stroke="#5aa866" fill="none" /></Ico>
              <span className="ml-[4px]">云检查</span>
              <Sep className="ml-[7px]" />
              <Ico className="ml-[4px]"><circle cx="4" cy="10" r="3" fill="none" stroke="#777" strokeWidth="1.500" /><circle cx="12" cy="10" r="3" fill="none" stroke="#777" strokeWidth="1.500" /><path d="M7 9h2M3 7l3-4M13 7l-2-3" stroke="#777" fill="none" /></Ico>
              <span className="ml-[5px]">查看工程量</span>
              <Ico className="ml-[8px]"><path d="M3 1h12v9H3zM6 1v9M10 1v9M3 4h12M3 7h12" fill="#eef2f7" stroke="#6c87ad" /><circle cx="4" cy="12" r="3" fill="#e3b23c" /></Ico>
              <span className="ml-[3px]">查看计算式</span>
              <Ico className="ml-[7px]"><path d="M1 2h8v12H1zM1 6h8M1 10h8M4 2v12" fill="#eef2f7" stroke="#7d8aa0" /><path d="M9 6l6 4-3 1 1 3-2 1-1-3-2 2z" fill="#cdd6e4" stroke="#7d8aa0" /></Ico>
              <span className="ml-[4px]">批量选择</span>
              <Ico className="ml-[8px]"><path d="M2 9l10-7v4l-7 3v6H2zM7 12h7v3H7z" fill="#c9c9bd" /></Ico>
              <span className="ml-[3px] text-[#a8a89c]">平齐板顶</span>
              <Sep className="ml-[5px]" />
              <Gripper className="ml-[3px]" />
              <Select label="当前楼层" className="ml-[5px] w-[77px]" />
              <Ico className="ml-[5px]"><path d="M1 5l4-4h10v10l-4 4H1zM1 5h10v10M11 5l4-4" fill="#dceaf5" stroke="#4a78a8" /></Ico>
              <span className="ml-[4px]">俯视</span>
              <Caret className="ml-[6px]" />
              <Ico className="ml-[9px]"><circle cx="7" cy="7" r="5" fill="#7ec98a" /><path d="M3 15l6-6 4 4" stroke="#c9743a" fill="none" strokeWidth="2" /></Ico>
            </div>
            <div className="flex-1 min-h-0 flex">
              <NavPanel />
              <div className="w-[213px] ml-[3px] shrink-0 flex flex-col">
                <ListPanel />
                <PropPanel />
              </div>
              <div className="flex-1 min-w-0 flex flex-col pl-[3px] border-l border-[#d6d3c2]">
                <div className="h-[28px] shrink-0 flex items-center text-[12px] whitespace-nowrap border-b border-[#d6d3c2]">
                  <Gripper className="ml-[4px]" />
                  <Select label="基础层" className="ml-[3px] w-[55px]" />
                  <Select label="基础" className="ml-[5px] w-[68px]" />
                  <Select label="垫层" className="ml-[4px] w-[68px]" />
                  <Select label="DC-2" mono className="ml-[4px] w-[68px]" />
                  <Select label="分层1" className="ml-[4px] w-[70px]" />
                  <div className="ml-[9px] w-[50px] h-[23px] shrink-0 rounded-[2px] border border-[#8d9db0] bg-[#f6f5ee] flex items-center pl-[3px] text-[#222]">
                    <Ico><rect x="1" y="2" width="12" height="11" fill="#f5f2e6" stroke="#b07d3a" /><path d="M2 11l6-5 6 4-4 2z" fill="#e0a93a" stroke="#9a6a22" /></Ico>
                    <span className="ml-[2px]">属性</span>
                  </div>
                  <span className="ml-[46px] text-[13px] font-bold text-[#333]">»</span>
                </div>
                <div className="h-[26px] shrink-0 flex items-center text-[12px] text-[#222] whitespace-nowrap">
                  <div className="ml-[8px] w-[51px] h-[23px] shrink-0 rounded-[2px] border border-[#b4bbc6] bg-[#fbfbf7] flex items-center pl-[2px]">
                    <svg width="12" height="16" viewBox="0 0 12 16" className="shrink-0"><path d="M2 1v12l3-3 2 5 2-1-2-5h4z" fill="#fff" stroke="#666" /></svg>
                    <span className="ml-[5px]">选择</span>
                  </div>
                  <Caret className="ml-[2px]" />
                  <Sep className="ml-[6px]" />
                  <Ico className="ml-[6px]"><path d="M1 2l13 13M14 10v5H9" fill="none" stroke="#55606f" /></Ico>
                  <span className="ml-[4px]">直线</span>
                  <Ico className="ml-[7px]"><path d="M2 15C3 8 8 3 14 1" fill="none" stroke="#a97a62" strokeWidth="1.500" /></Ico>
                  <span className="ml-[4px]">三点画弧</span>
                  <Caret className="ml-[8px]" />
                  <Select className="ml-[7px] w-[53px]" />
                  <Ico className="ml-[5px]"><rect x="1" y="3" width="14" height="10" fill="#cfe0f5" stroke="#6c87ad" /></Ico>
                  <span className="ml-[4px]">矩形</span>
                  <Sep className="ml-[7px]" />
                  <Ico className="ml-[5px]"><rect x="1" y="3" width="14" height="11" fill="#eef2f7" stroke="#5f6f85" strokeDasharray="2 1" /><path d="M5 8h3M6.500 6.500v3M11 6h2" stroke="#3f7f4f" /></Ico>
                  <span className="ml-[4px]">智能布置</span>
                  <Caret className="ml-[3px]" />
                  <span className="ml-[25px] text-[13px] font-bold text-[#333] -mt-[5px]">»</span>
                  <Gripper className="ml-[4px]" />
                </div>
                <div className="flex-1 min-h-0 flex">
                  <VToolbar />
                  <Canvas />
                </div>
              </div>
            </div>
          </div>
        </div>
      </div>
      <Browser />
      <Arrows />
    </div>
  );
}
